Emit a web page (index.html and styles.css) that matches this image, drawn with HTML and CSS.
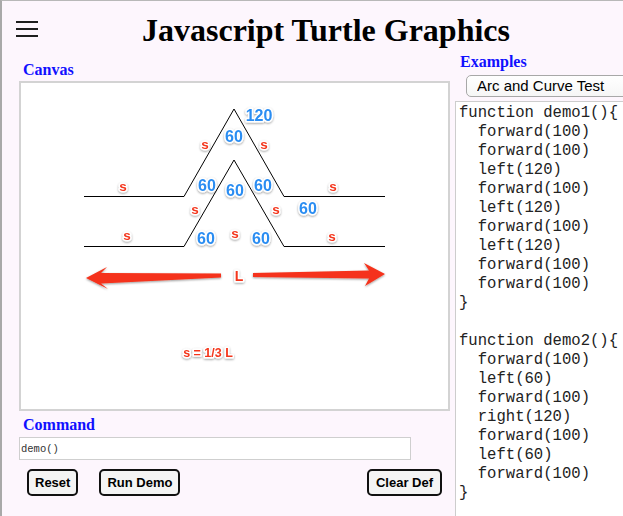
FILE: index.html
```html
<!DOCTYPE html>
<html lang="en">
<head>
<meta charset="utf-8">
<title>Javascript Turtle Graphics</title>
<link rel="stylesheet" href="styles.css">
</head>
<body>
<div class="page">
  <header class="header">
    <div class="menu" aria-label="menu"><span></span><span></span><span></span></div>
    <h1 class="title">Javascript Turtle Graphics</h1>
  </header>
  <main class="main">
    <section class="left">
      <h2 class="label label-canvas">Canvas</h2>
      <div class="canvas">
        <svg class="drawing" width="427" height="326" viewBox="21 83 427 326" xmlns="http://www.w3.org/2000/svg">
          <defs>
            <filter id="sh" x="-30%" y="-30%" width="160%" height="170%">
              <feDropShadow dx="0" dy="1" stdDeviation="0.9" flood-color="#000" flood-opacity="0.4"/>
            </filter>
          </defs>
          <polyline class="line" points="84,196.5 184,196.5 234,109 284,196.5 385,196.5"/>
          <polyline class="line" points="84,246.5 184,246.5 234,160 284,246.5 385,246.5"/>

          <text class="blue" x="259" y="115">120</text>
          <text class="blue" x="234" y="136">60</text>
          <text class="blue" x="207" y="185">60</text>
          <text class="blue" x="235" y="190">60</text>
          <text class="blue" x="263" y="185">60</text>
          <text class="blue" x="308" y="208">60</text>
          <text class="blue" x="206" y="238">60</text>
          <text class="blue" x="261" y="238">60</text>

          <text class="red" x="205" y="144">s</text>
          <text class="red" x="264" y="144">s</text>
          <text class="red" x="123" y="186">s</text>
          <text class="red" x="333" y="186">s</text>
          <text class="red" x="195" y="209">s</text>
          <text class="red" x="276" y="209">s</text>
          <text class="red" x="127" y="235">s</text>
          <text class="red" x="235" y="233">s</text>
          <text class="red" x="332" y="236">s</text>

          <path class="arrow" d="M86,278 L107,267 L101,273 L221,273.5 L221,277.5 L101,283.5 L108,289 Z"/>
          <path class="arrow" d="M385,274 L364,263 L369,270.5 L253,273 L253,277 L369,278.5 L365,286 Z"/>
          <text class="red red-l" x="239" y="276">L</text>
          <text class="red red-small" x="208" y="353">s = 1/3 L</text>
        </svg>
      </div>
      <h2 class="label label-command">Command</h2>
      <input class="command" type="text" value="demo()">
      <div class="buttons">
        <button class="btn">Reset</button>
        <button class="btn btn-demo">Run Demo</button>
        <button class="btn btn-clear">Clear Def</button>
      </div>
    </section>
    <section class="right">
      <h2 class="label label-examples">Examples</h2>
      <select class="examples">
        <option>Arc and Curve Test</option>
      </select>
      <pre class="code">function demo1(){
  forward(100)
  forward(100)
  left(120)
  forward(100)
  left(120)
  forward(100)
  left(120)
  forward(100)
  forward(100)
}

function demo2(){
  forward(100)
  left(60)
  forward(100)
  right(120)
  forward(100)
  left(60)
  forward(100)
}
</pre>
    </section>
  </main>
</div>
</body>
</html>
```
FILE: styles.css
```css
html, body {
  margin: 0;
  padding: 0;
  overflow: hidden;
  width: 623px;
  height: 516px;
}

.page {
  box-sizing: border-box;
  width: 623px;
  height: 516px;
  overflow: hidden;
  background: #fdf6fd;
  border-top: 1px solid #b8b8b8;
  border-left: 2px solid #a9a9a9;
}

.header {
  display: flex;
  align-items: flex-start;
  height: 49px;
  padding-right: 9px;
}

.menu {
  display: flex;
  flex-direction: column;
  gap: 5px;
  width: 22px;
  margin: 20px 0 0 14px;
}

.menu span {
  display: block;
  height: 2px;
  background: #1e1e1e;
}

.title {
  flex: 1;
  margin: 0;
  padding-top: 11px;
  text-align: center;
  font: bold 32px/36px "Liberation Serif", "Times New Roman", serif;
  color: #000;
}

.main {
  display: grid;
  grid-template-columns: 431px 220px;
  column-gap: 5px;
  padding-left: 17px;
}

.left, .right {
  display: flex;
  flex-direction: column;
  align-items: flex-start;
}

.label {
  margin: 0;
  font: bold 16px/18px "Liberation Serif", "Times New Roman", serif;
  color: #1010ff;
}

.label-canvas {
  margin-top: 11px;
  padding-left: 4px;
}

.canvas {
  box-sizing: border-box;
  width: 431px;
  height: 330px;
  margin-top: 2px;
  border: 2px solid #d3d3d3;
  background: #fff;
}

.drawing {
  display: block;
}

.line {
  fill: none;
  stroke: #000;
  stroke-width: 1px;
}

.blue, .red {
  text-anchor: middle;
  dominant-baseline: central;
  font-family: "Liberation Sans", Arial, sans-serif;
  font-weight: bold;
  stroke: #fff;
  stroke-width: 3px;
  stroke-linejoin: round;
  paint-order: stroke;
  filter: url(#sh);
}

.blue {
  fill: #2b8df2;
  font-size: 16px;
}

.red {
  fill: #f4361c;
  font-size: 13.5px;
}

.red-l {
  font-size: 14px;
}

.red-small {
  font-size: 12.5px;
}

.arrow {
  fill: #f5321a;
  filter: url(#sh);
}

.label-command {
  margin-top: 5px;
  padding-left: 4px;
}

.command {
  box-sizing: border-box;
  width: 392px;
  height: 23px;
  margin: 3px 0 0;
  padding: 0 1px;
  border: 1px solid #cfcfcf;
  background: #fff;
  font: 10.5px "Liberation Mono", "Courier New", monospace;
  color: #333;
  outline: none;
}

.buttons {
  display: flex;
  align-self: stretch;
  margin-top: 9px;
  padding: 0 8px;
}

.btn {
  box-sizing: border-box;
  height: 27px;
  padding: 0 6px;
  border: 2px solid #111;
  border-radius: 5px;
  background: #f4f4f4;
  font: bold 13px "Liberation Sans", Arial, sans-serif;
  color: #000;
}

.btn-demo {
  margin-left: 21px;
}

.btn-clear {
  margin-left: auto;
  padding: 0 7px;
}

.label-examples {
  margin-top: 3px;
  padding-left: 5px;
}

.examples {
  appearance: none;
  -webkit-appearance: none;
  box-sizing: border-box;
  width: 200px;
  height: 22px;
  margin: 4px 0 0 11px;
  padding: 0 10px;
  border: 1px solid #a8a8a8;
  border-radius: 5px;
  background: linear-gradient(#ffffff, #f6f6f6);
  font: 15px/20px "Liberation Sans", Arial, sans-serif;
  color: #000;
}

.code {
  box-sizing: border-box;
  width: 220px;
  height: 440px;
  margin: 4px 0 0;
  padding: 2px 3px;
  border: 1px solid #cdcdcd;
  background: #fff;
  font: 15.6px/19px "Liberation Mono", "Courier New", monospace;
  color: #222;
}
```
